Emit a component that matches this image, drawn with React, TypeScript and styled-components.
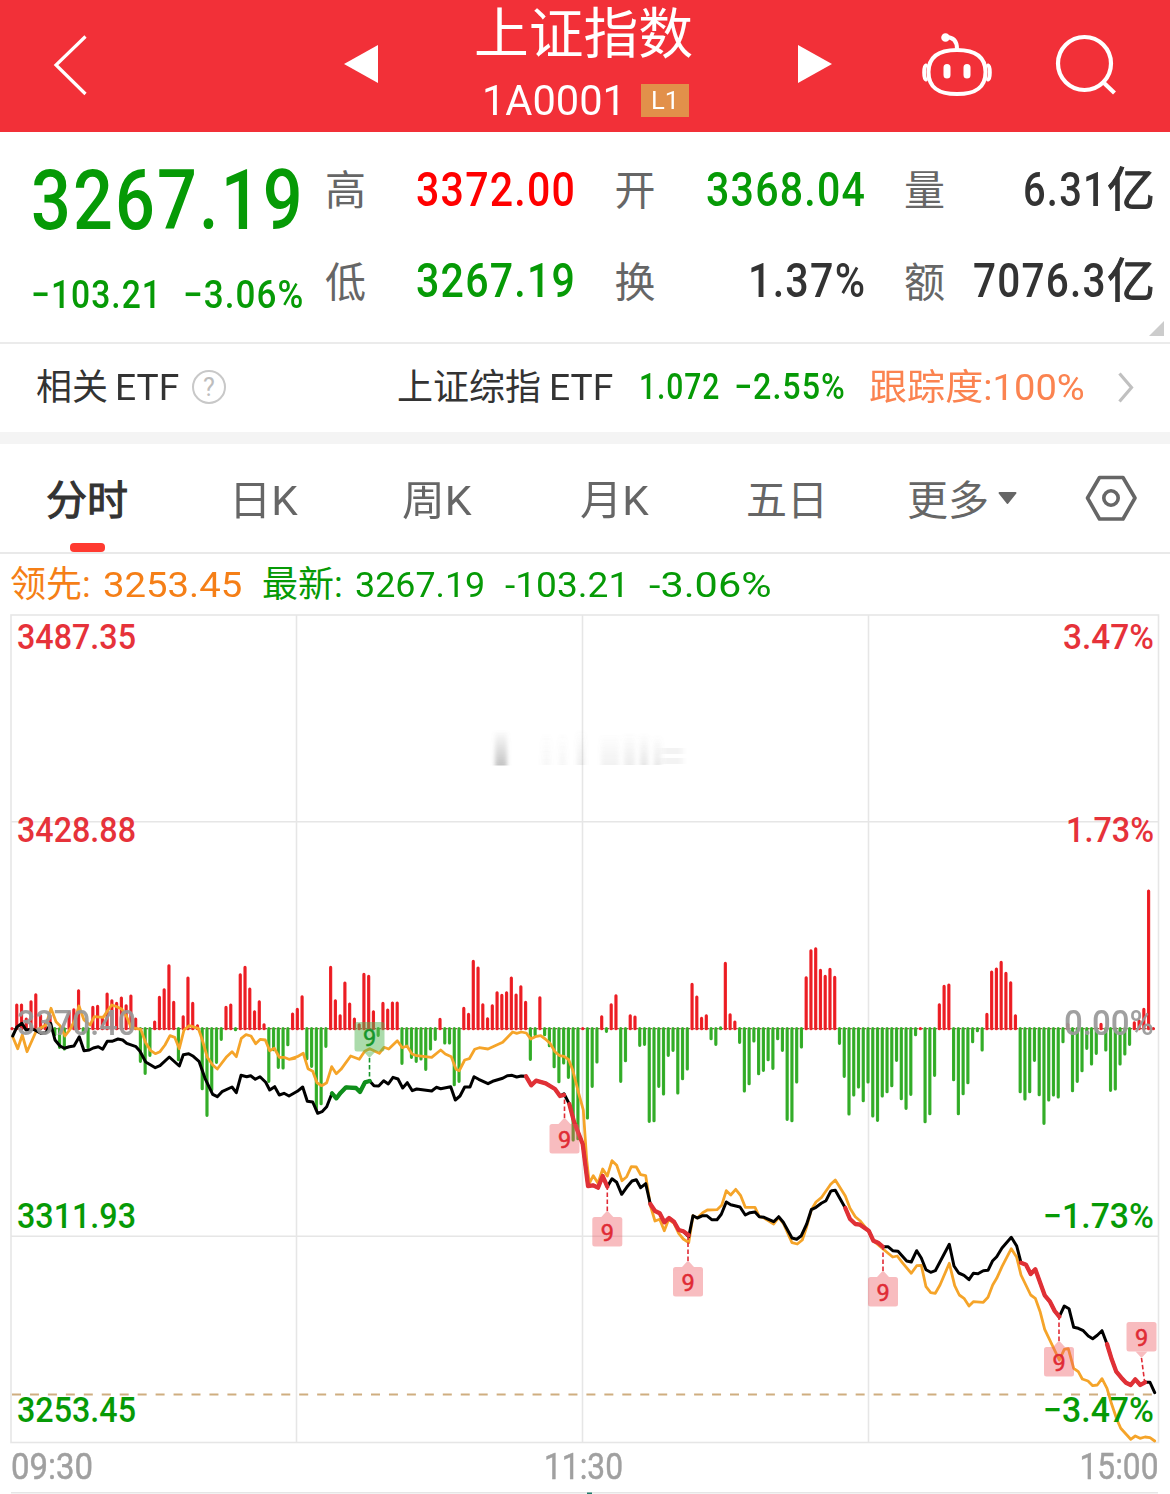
import React, { useLayoutEffect, useRef, useState } from "react";
import styled, { createGlobalStyle } from "styled-components";

const GREEN = "#069a06";
const RED = "#e6323a";
const FONT = `Roboto, "Noto Sans CJK SC", sans-serif`;

const GlobalStyle = createGlobalStyle`
  body { margin: 0; background: #fff; font-family: ${FONT}; }
  * { box-sizing: border-box; }
`;

const Page = styled.main`
  width: 1170px;
  height: 1494px;
  display: flex;
  flex-direction: column;
  overflow: hidden;
  background: #fff;
`;

/* ---------- text fitted to a fixed measure ---------- */

const FitBox = styled.span<{ $w: number; $size: number; $color?: string; $weight?: number; $stroke?: number; $ml?: number; $dy?: number }>`
  display: inline-block;
  flex: none;
  width: ${(p) => p.$w}px;
  margin-left: ${(p) => p.$ml ?? 0}px;
  padding-top: ${(p) => p.$dy ?? 0}px;
  font-size: ${(p) => p.$size}px;
  font-weight: ${(p) => p.$weight ?? 400};
  letter-spacing: ${(p) => (p.$weight === 500 ? "0.03em" : "normal")};
  color: ${(p) => p.$color ?? "inherit"};
  -webkit-text-stroke: ${(p) => p.$stroke ?? 0}px currentColor;
  white-space: pre;
`;

const FitInner = styled.span`
  display: inline-block;
  transform-origin: 0 50%;
`;

type FitProps = { w: number; size: number; color?: string; weight?: number; stroke?: number; ml?: number; dy?: number; children: string };

function Fit({ w, size, color, weight, stroke, ml, dy, children }: FitProps) {
  const ref = useRef<HTMLSpanElement>(null);
  const [scale, setScale] = useState(1);
  useLayoutEffect(() => {
    if (ref.current) setScale(w / ref.current.offsetWidth);
  }, [w, children]);
  return (
    <FitBox $w={w} $size={size} $color={color} $weight={weight} $stroke={stroke} $ml={ml} $dy={dy}>
      <FitInner ref={ref} style={{ transform: `scaleX(${scale})` }}>{children}</FitInner>
    </FitBox>
  );
}

/* ---------- header ---------- */

const Header = styled.header`
  flex: none;
  height: 132px;
  display: grid;
  grid-template-columns: 344px 34px 420px 34px 87px 76px 55px 66px;
  background: #f23038;
  color: #fff;
  svg { display: block; }
`;

const BackSlot = styled.div`
  padding: 30px 0 0 49px;
`;

const ArrowSlot = styled.div`
  padding-top: 44px;
`;

const RobotSlot = styled.div`
  grid-column: 6;
  padding-top: 30px;
`;

const SearchSlot = styled.div`
  grid-column: 8;
  padding-top: 32px;
`;

const TitleBlock = styled.div`
  display: flex;
  flex-direction: column;
`;

const Title = styled.div`
  height: 66px;
  line-height: 69px;
  padding-left: 96px;
`;

const CodeLine = styled.div`
  height: 66px;
  line-height: 69px;
  display: flex;
  padding-left: 104px;
`;

const LevelTag = styled.span`
  width: 48px;
  height: 33px;
  margin: 18px 0 0 15px;
  padding-left: 10px;
  line-height: 32px;
  background: #e2904a;
`;

/* ---------- quote ---------- */

const Quote = styled.section`
  flex: none;
  position: relative;
  height: 212px;
  display: flex;
  border-bottom: 2px solid #ebebeb;
`;

const Summary = styled.div`
  width: 325px;
  padding-left: 31px;
  color: ${GREEN};
`;

const Price = styled.div`
  height: 136px;
  line-height: 138px;
`;

const Change = styled.div`
  display: flex;
  height: 53px;
  line-height: 54px;
`;

const Stats = styled.div`
  display: grid;
  grid-template-columns: repeat(3, 251px);
  grid-template-rows: 115px 68px;
  column-gap: 38.5px;
`;

const Stat = styled.div<{ $h: number }>`
  display: flex;
  justify-content: space-between;
  line-height: ${(p) => p.$h}px;
`;

const Corner = styled.i`
  position: absolute;
  right: 6px;
  bottom: 6px;
  border-style: solid;
  border-width: 0 0 15px 15px;
  border-color: transparent transparent #ccc transparent;
`;

/* ---------- ETF ---------- */

const EtfRow = styled.section`
  flex: none;
  height: 100px;
  display: flex;
  padding-left: 36px;
  line-height: 87px;
  color: #333;
  border-bottom: 12px solid #f4f4f4;
  svg { flex: none; display: block; }
`;

const Help = styled.span`
  width: 34px;
  height: 34px;
  margin: 26px 0 0 13px;
  border: 2px solid #c8c8c8;
  border-radius: 50%;
  color: #bdbdbd;
  font-size: 25px;
  line-height: 31px;
  text-align: center;
`;

/* ---------- tabs ---------- */

const Tabs = styled.nav`
  flex: none;
  height: 110px;
  display: flex;
  border-bottom: 2px solid #e9e9e9;
  line-height: 112px;
  color: #666;
  svg { flex: none; display: block; }
`;

const Tab = styled.div<{ $ml: number; $active?: boolean }>`
  position: relative;
  display: flex;
  margin-left: ${(p) => p.$ml}px;
  color: ${(p) => (p.$active ? "#333" : "#666")};
  &::after {
    content: "";
    display: ${(p) => (p.$active ? "block" : "none")};
    position: absolute;
    left: 24px;
    bottom: 0;
    width: 35px;
    height: 9px;
    border-radius: 4px;
    background: #ff3a30;
  }
`;

const SettingsSlot = styled.div`
  margin-left: 64px;
`;

const Legend = styled.div`
  flex: none;
  height: 60px;
  line-height: 63px;
  display: flex;
  padding-left: 10px;
`;

const ChartArea = styled.section`
  flex: none;
  height: 880px;
  svg { display: block; font-family: ${FONT}; }
`;

/* ---------- chart data ---------- */

// Signed bar lengths per minute, in thirds of a pixel.
const BARS = [
  3, 75, 75, 33, 85, 106, 43, 18, 43, -22, -60, -65, 53, 61, 118, -17, -60, 68, 71, 38,
  108, 88, 80, 96, 73, 102, 33, -102, -138, -84, 24, 98, 121, 193, 83, -97, 40, 156, 80, 13,
  -184, -264, -187, -105, -36, 68, 75, -7, 166, 188, 123, 55, 85, 16, -162, -67, -120, -122, -52, 48,
  62, 100, -94, -117, -247, -229, -57, 188, 88, 43, 141, 78, 33, 16, 167, 161, 55, -24, 80, 60,
  81, 81, -108, -57, -90, -102, -95, -126, -65, -36, 32, -47, -47, -172, -162, 65, 47, 206, 186, 76,
  34, 73, 112, 104, 112, 156, 105, 130, 83, -96, -22, 97, -22, -55, -118, -163, -107, -150, -338, -334,
  3, -272, -177, -104, 40, -12, 76, 103, -162, -100, 43, 39, -54, -51, -282, -280, -177, -200, -84, -69,
  -197, -154, -125, 137, 99, 35, 43, -34, -51, -2, 200, 46, 24, -45, -191, -169, -41, -139, -129, -97,
  -123, -34, -69, -276, -280, -164, -59, 157, 238, 244, 179, 161, 182, 158, -48, -147, -260, -203, -179, -220,
  -164, -266, -279, -206, -193, -175, -99, -214, -243, -201, -22, 3, -283, -259, -144, 76, 131, 135, -157, -259,
  -199, -166, -43, -10, -68, 47, 174, 183, 203, 170, 142, 43, -193, -215, -193, -99, -202, -288, -218, -203,
  -209, -43, 17, -190, -162, -130, -63, -110, -78, 17, -68, -189, -185, -110, -80, -51, 22, 27, 62, 417, 3,
];

// Each chunk holds an origin and x,y pairs in thirds of a pixel.
type Chunk = [number, number, string];
const toPoints = (chunks: Chunk[]) =>
  chunks
    .map(([ox, oy, s]) =>
      s.trim().split(/\s+/).map((p) => {
        const [x, y] = p.split(",").map(Number);
        return `${(ox + x / 3).toFixed(1)},${(oy + y / 3).toFixed(1)}`;
      }).join(" "))
    .join(" ");

const PRICE = toPoints([
  [0, 940, "38,288 50,262 66,250 78,270 100,268 122,280 138,278 152,250 165,300 180,318 193,325 208,320 222,318 238,290 252,332 268,330 280,324 295,320 308,328 322,304 336,304 354,297 368,300 380,310 408,320 420,334 437,366 466,383 480,377 508,351 538,378 550,344 566,341 580,349 597,364 615,415 638,463 652,470 666,455 696,441 709,458 723,406 740,410 752,407 766,418 780,410 797,427 809,450 824,440 838,465 852,460 867,468"],
  [290, 940, "22,454 38,441 52,484 68,486 83,520 96,515 110,500 126,460 139,475 152,458 168,442 198,444 210,456 225,427 239,423 252,437 266,438 281,422 295,432 309,412 324,417 338,444 352,428 367,452 380,447 425,453 439,442 452,446 482,440 496,480 510,468 524,441 540,441 552,410 566,418 594,431 608,424 638,415 652,407 666,406 680,411 694,408 708,409 724,436 738,422 767,430 795,447 810,468 822,461 838,492 852,545 878,612"],
  [560, 930, "84,768 100,766 114,773 128,738 142,770 156,746 170,757 185,793 200,772 216,753 229,749 242,773 257,761 271,822 285,843 299,850 313,877 327,864 342,875 356,900 370,904 386,920 399,857 412,864 428,857 440,857 455,869 471,869 484,853 499,816 512,824 540,831 556,855 570,848 585,846 598,860 612,862 641,875 656,860 670,877 696,924 710,928 724,917 740,882 754,839 768,832 784,820 798,812 812,784"],
  [830, 1120, "6,212 16,211 46,264 60,297 76,312 90,314 116,332 130,362 144,368 158,380 174,380 188,392 204,394 230,423 244,426 260,392 274,414 288,449 302,457 316,452 358,373 372,438 386,459 402,466 417,479 430,460 444,461 460,452 474,451 488,422 500,410 516,384 544,352 560,378 573,428 588,434 602,462 616,448 644,526 660,545 674,573 688,590 703,558 717,566 731,622 745,625 760,632 775,648 788,656 802,646 816,632 831,672 845,718 859,755 874,773 888,788 902,795 916,778 931,795 945,787 960,787 974,818"],
]);

const LEAD = toPoints([
  [0, 940, "38,290 53,326 67,285 81,335 110,270 138,255 153,205 168,245 180,257 195,288 210,268 225,240 237,198 252,240 270,255 283,230 310,232 322,213 335,195 350,200 365,207 380,230 393,262 422,268 437,308 452,332 466,341 480,335 495,315 510,287 524,292 538,326 552,270 568,257 595,265 607,300 622,352 638,375 652,387 680,350 696,335 709,350 724,295 738,284 753,288 767,311 781,298 796,300 809,332 823,325 838,352 852,352 867,358 885,355"],
  [290, 940, "0,357 22,350 40,340 54,386 68,394 81,428 95,437 110,428 125,380 139,401 153,388 182,348 208,358 224,334 239,326 268,340 282,322 296,327 322,302 337,323 351,318 366,342 380,347 425,352 452,330 466,342 484,350 498,388 508,392 524,360 538,356 554,328 568,323 594,327 638,307 668,276 680,280 694,276 709,279 722,297 736,290 752,287 766,297 780,310 795,335 809,347 822,349 836,359 848,390 866,460"],
  [560, 930, "70,540 80,690 88,760 100,737 114,760 128,717 142,738 156,692 170,706 186,752 200,740 214,710 229,711 242,734 257,737 271,826 285,873 299,868 313,902 326,868 342,880 356,910 370,927 386,938 399,857 412,864 428,848 442,840 471,839 485,826 499,782 512,795 527,778 542,797 556,832 585,832 598,860 612,864 641,882 656,862 670,880 696,938 712,942 727,930 740,890 754,840 768,816 784,803 812,763"],
  [830, 1120, "16,180 46,228 60,265 76,290 90,302 116,334 130,362 158,386 188,411 202,408 217,428 244,460 260,437 274,436 288,500 302,518 316,520 330,495 358,430 374,497 388,525 402,535 417,558 430,545 460,547 474,532 488,495 500,475 516,440 544,386 560,412 573,465 602,525 616,535 631,577 644,628 688,720 703,688 715,686 731,745 745,755 757,777 774,783 788,797 802,795 816,776 831,805 845,853 860,897 872,925 902,958 916,948 930,955 945,951 960,953 974,963"],
]);

const FALLS = [
  toPoints([[290, 940, "708,409 724,436 738,422 767,430 795,447 810,468 822,465"]]),
  toPoints([[290, 940, "838,492 852,545 878,612"], [560, 930, "84,768 100,766 114,773 128,738 142,770"]]),
  toPoints([[560, 930, "271,822 285,843 299,850 313,877 327,864 342,875 356,900 370,904 386,916"]]),
  toPoints([[830, 1120, "46,264 60,297 76,312 90,314 116,332 130,362 144,368 158,380"]]),
  toPoints([[830, 1120, "573,428 588,434 602,462 616,448 644,526 660,545 674,573 688,590"]]),
  toPoints([[830, 1120, "831,672 845,718 859,755 874,773 888,788 902,795 916,778 931,795 945,787"]]),
];
const RISE = toPoints([[290, 940, "126,460 139,475 152,458 168,442 198,444 210,456 225,427 239,423"]]);

type Mark = { x: number; y: number; tx: number; ty: number; up?: boolean; green?: boolean };
const MARKS: Mark[] = [
  { x: 369.5, y: 1022, tx: 369.5, ty: 1082, up: true, green: true },
  { x: 564.5, y: 1124, tx: 564.5, ty: 1096 },
  { x: 607.3, y: 1217, tx: 607.3, ty: 1188 },
  { x: 688, y: 1267, tx: 688, ty: 1237 },
  { x: 883, y: 1277, tx: 883, ty: 1248 },
  { x: 1059, y: 1347, tx: 1059, ty: 1318 },
  { x: 1141.5, y: 1322, tx: 1144.5, ty: 1381, up: true },
];

function Marker({ x, y, tx, ty, up, green }: Mark) {
  const c = green ? "#16962a" : "#e02b35";
  const tip = up
    ? `M${x - 6} ${y + 29.6}L${x} ${y + 36}L${x + 6} ${y + 29.6}Z`
    : `M${x - 6} ${y}L${x} ${y - 6.5}L${x + 6} ${y}Z`;
  return (
    <g>
      <g fill={green ? "#52b552" : "#ee5a62"} opacity={green ? 0.48 : 0.4}>
        <rect x={x - 15} y={y} width={30} height={29.6} rx={2.5} />
        <path d={tip} />
      </g>
      <line x1={x} y1={up ? y + 36 : y - 6} x2={tx} y2={ty} stroke={c} strokeWidth={1.6} strokeDasharray="4.5 2.5" />
      <text x={x} y={y + 23.8} textAnchor="middle" fontSize={23.5} fill={c} stroke={c} strokeWidth={0.5}>9</text>
    </g>
  );
}

const AXIS: { t: string; x: number; w: number; cy: number; c: string; weight?: number; size?: number }[] = [
  { t: "3487.35", x: 18, w: 117, cy: 636.5, c: RED },
  { t: "3428.88", x: 18, w: 117, cy: 829.5, c: RED },
  { t: "3370.40", x: 18, w: 117, cy: 1022.5, c: "#999" },
  { t: "3311.93", x: 18, w: 117, cy: 1216, c: GREEN },
  { t: "3253.45", x: 18, w: 117, cy: 1409.3, c: GREEN },
  { t: "3.47%", x: 1064, w: 89, cy: 636.5, c: RED },
  { t: "1.73%", x: 1067, w: 86, cy: 829.5, c: RED },
  { t: "0.00%", x: 1065, w: 88, cy: 1022.5, c: "#999" },
  { t: "−1.73%", x: 1044, w: 109, cy: 1216, c: GREEN },
  { t: "−3.47%", x: 1044, w: 109, cy: 1409.3, c: GREEN },
  { t: "09:30", x: 12, w: 80, cy: 1466, c: "#999", weight: 400, size: 36 },
  { t: "11:30", x: 545, w: 77, cy: 1466, c: "#999", weight: 400, size: 36 },
  { t: "15:00", x: 1080.5, w: 77, cy: 1466, c: "#999", weight: 400, size: 36 },
];

function Chart() {
  const base = 1028.7;
  return (
    <svg width={1170} height={880} viewBox="0 614 1170 880">
      <defs>
        <linearGradient id="fade" x1="0" y1="0" x2="0" y2="1">
          <stop offset="0" stopColor="#888" stopOpacity="0" />
          <stop offset="1" stopColor="#888" stopOpacity="1" />
        </linearGradient>
        <filter id="soft" x="-20%" y="-20%" width="140%" height="140%"><feGaussianBlur stdDeviation="2 0.4" /></filter>
      </defs>
      <g stroke="#e6e6e6" strokeWidth={1.6} fill="none">
        <rect x={11} y={615} width={1147.5} height={827.5} />
        <path d="M296.5 615V1442M582.5 615V1442M868.5 615V1442M11 821.7H1158M11 1236.2H1158M11 1492.8H1158" />
      </g>
      <g fill="url(#fade)" filter="url(#soft)">
        <rect x={495} y={730} width={12} height={35.5} opacity={0.5} />
        <rect x={542} y={733} width={9} height={32} opacity={0.06} />
        <rect x={559} y={733} width={7} height={32} opacity={0.08} />
        <rect x={577} y={730} width={8} height={35} opacity={0.14} />
        <rect x={601} y={733} width={18} height={32} opacity={0.11} />
        <rect x={624} y={733} width={11} height={32} opacity={0.15} />
        <rect x={640} y={733} width={8} height={32} opacity={0.2} />
        <rect x={654} y={735} width={7} height={30} opacity={0.18} />
      </g>
      <g fill="#888" filter="url(#soft)" opacity={0.09}>
        <rect x={662} y={748} width={21} height={6} />
        <rect x={662} y={758} width={21} height={6} />
      </g>
      <rect x={587} y={1492.5} width={5} height={2} fill="#1d7a6a" />
      <line x1={12} y1={base} x2={1155} y2={base} stroke="#8a5a4a" strokeWidth={1.2} strokeDasharray="3 1.755" />
      <g strokeWidth={3.2} strokeLinecap="round">
        {BARS.map((v, i) => {
          const x = 12 + i * 4.7556;
          const end = v > 0 ? base - v / 3 + 1.4 : base - v / 3 - 1.4;
          return <line key={i} x1={x} y1={base} x2={x + 0.001} y2={v === 3 ? base : end} stroke={v > 0 ? "#f02228" : "#38b02c"} />;
        })}
      </g>
      <g strokeWidth={1} opacity={0.3}>
        {BARS.map((v, i) => (
          <line key={i} x1={12 + i * 4.7556} x2={12 + i * 4.7556} y1={base} y2={base - v / 3} stroke={v > 0 ? "#d00c14" : "#1d9a1d"} />
        ))}
      </g>
      <line x1={12} y1={1394.6} x2={1155} y2={1394.6} stroke="#cfae80" strokeWidth={2} strokeDasharray="9 8.95" />
      <g fill="none" strokeLinejoin="round" strokeLinecap="round">
        <polyline points={LEAD} stroke="#f5a429" strokeWidth={2.8} />
        <polyline points={PRICE} stroke="#000" strokeWidth={3} />
        {FALLS.map((p) => <polyline key={p} points={p} stroke="#e03036" strokeWidth={4.3} />)}
        <polyline points={RISE} stroke="#0f8f1b" strokeWidth={4.3} />
      </g>
      {AXIS.map((a) => {
        const size = a.size ?? 35;
        return (
          <text key={a.t} x={a.x - 1} y={a.cy + size * 0.3555} fontSize={size} fontWeight={a.weight ?? 500} fill={a.c}
            stroke={a.weight ? a.c : "none"} strokeWidth={0.5}
            textLength={a.w + 2} lengthAdjust="spacingAndGlyphs" opacity={a.c === "#999" ? 0.93 : 1}>
            {a.t}
          </text>
        );
      })}
      {MARKS.map((m) => <Marker key={m.x} {...m} />)}
    </svg>
  );
}

export default function App() {
  return (
    <Page>
      <GlobalStyle />
      <Header>
        <BackSlot>
          <svg width="44" height="70" viewBox="0 0 44 70" fill="none" stroke="#fff" strokeWidth="3.2"><path d="M36.5 6.5L7 35L36.5 64" /></svg>
        </BackSlot>
        <ArrowSlot><svg width="34" height="40"><path d="M0 20L34 1V39Z" fill="#fff" /></svg></ArrowSlot>
        <TitleBlock>
          <Title><Fit w={219} size={54.5}>上证指数</Fit></Title>
          <CodeLine>
            <Fit w={144} size={43}>1A0001</Fit>
            <LevelTag><Fit w={28} size={26.5}>L1</Fit></LevelTag>
          </CodeLine>
        </TitleBlock>
        <ArrowSlot><svg width="34" height="40"><path d="M34 20L0 1V39Z" fill="#fff" /></svg></ArrowSlot>
        <RobotSlot>
          <svg width="76" height="70" viewBox="919 30 76 70" fill="none" stroke="#fff" strokeWidth="4" strokeLinecap="round">
            <path d="M957 50C974 50 985.5 56 985.5 72C985.5 88 975 94 957 94C939 94 928.5 88 928.5 72C928.5 56 940 50 957 50Z" />
            <path d="M957 49C957 41 953 37 946 37" />
            <circle cx="945.5" cy="37.500" r="2.3" fill="#fff" />
            <path d="M926 65.5Q924.200 66 924.200 72.500Q924.200 79 926 79.500M988 65.500Q989.800 66 989.800 72.500Q989.800 79 988 79.500" />
            <path d="M947 67.500V75M967 67.500V75" strokeWidth="7" />
          </svg>
        </RobotSlot>
        <SearchSlot>
          <svg width="66" height="66" viewBox="1050 32 66 66" fill="none" stroke="#fff" strokeWidth="4.2">
            <circle cx="1084.5" cy="63.5" r="26.5" />
            <path d="M1103.5 82.5L1114.5 93" />
          </svg>
        </SearchSlot>
      </Header>

      <Quote>
        <Summary>
          <Price><Fit w={274} size={82.5} weight={500}>3267.19</Fit></Price>
          <Change>
            <Fit w={131} size={38.5} weight={500}>−103.21</Fit>
            <Fit w={121} size={38.5} weight={500} ml={21}>−3.06%</Fit>
          </Change>
        </Summary>
        <Stats>
          <Stat $h={115}><Fit w={41} size={41} color="#666" dy={2}>高</Fit><Fit w={160} size={47.5} weight={500} color="#f00" dy={1}>3372.00</Fit></Stat>
          <Stat $h={115}><Fit w={41} size={41} color="#666" dy={2}>开</Fit><Fit w={160} size={47.5} weight={500} color={GREEN} dy={1}>3368.04</Fit></Stat>
          <Stat $h={115}>
            <Fit w={41} size={41} color="#666" dy={2}>量</Fit>
            <span><Fit w={84} size={47.5} weight={500} color="#333" dy={1}>6.31</Fit><Fit w={48} size={47} stroke={1} color="#333">亿</Fit></span>
          </Stat>
          <Stat $h={68}><Fit w={41} size={41} color="#666" dy={2}>低</Fit><Fit w={160} size={47.5} weight={500} color={GREEN}>3267.19</Fit></Stat>
          <Stat $h={68}><Fit w={41} size={41} color="#666" dy={2}>换</Fit><Fit w={118} size={47.5} weight={500} color="#333">1.37%</Fit></Stat>
          <Stat $h={68}>
            <Fit w={41} size={41} color="#666" dy={2}>额</Fit>
            <span><Fit w={134} size={47.5} weight={500} color="#333">7076.3</Fit><Fit w={48} size={47} stroke={1} color="#333">亿</Fit></span>
          </Stat>
        </Stats>
        <Corner />
      </Quote>

      <EtfRow>
        <Fit w={72} size={36} dy={1}>相关</Fit>
        <Fit w={64} size={36} ml={7} dy={1}>ETF</Fit>
        <Help>?</Help>
        <Fit w={144} size={36} ml={171} dy={1}>上证综指</Fit>
        <Fit w={64} size={36} ml={8} dy={1}>ETF</Fit>
        <Fit w={81} size={36} weight={500} color={GREEN} ml={26}>1.072</Fit>
        <Fit w={112} size={36} weight={500} color={GREEN} ml={14}>−2.55%</Fit>
        <Fit w={216} size={36} color="#fb8350" ml={23} dy={1}>跟踪度:100%</Fit>
        <svg width="60" height="88" fill="none" stroke="#c0c0c0" strokeWidth="3.2"><path d="M34.5 29.5L46.5 43.500L34.5 57.500" /></svg>
      </EtfRow>

      <Tabs>
        <Tab $ml={46} $active><Fit w={82} size={41} stroke={1.1} dy={1}>分时</Fit></Tab>
        <Tab $ml={101}><Fit w={69} size={41} dy={1}>日K</Fit></Tab>
        <Tab $ml={104}><Fit w={70} size={41} dy={1}>周K</Fit></Tab>
        <Tab $ml={108}><Fit w={69} size={41} dy={1}>月K</Fit></Tab>
        <Tab $ml={97}><Fit w={82} size={41} dy={1}>五日</Fit></Tab>
        <Tab $ml={79}>
          <Fit w={82} size={41} dy={1}>更多</Fit>
          <svg width="30" height="108"><path d="M10.5 49H26.500L18.500 59Z" fill="#666" stroke="#666" strokeWidth="2" strokeLinejoin="round" /></svg>
        </Tab>
        <SettingsSlot>
          <svg width="56" height="108" viewBox="1082 444 56 108" fill="none" stroke="#666" strokeWidth="3.6">
            <path d="M1086.5 498L1098.5 477.5H1122L1134 498L1122 519H1098.5Z" strokeLinejoin="round" />
            <circle cx="1110" cy="498" r="7.2" />
          </svg>
        </SettingsSlot>
      </Tabs>

      <Legend>
        <Fit w={81} size={36} color="#f57f17">领先:</Fit>
        <Fit w={139} size={35} color="#f57f17" ml={12}>3253.45</Fit>
        <Fit w={81} size={36} color={GREEN} ml={20}>最新:</Fit>
        <Fit w={130} size={35} color={GREEN} ml={12}>3267.19</Fit>
        <Fit w={124} size={35} color={GREEN} ml={20}>-103.21</Fit>
        <Fit w={123} size={35} color={GREEN} ml={20}>-3.06%</Fit>
      </Legend>

      <ChartArea><Chart /></ChartArea>
    </Page>
  );
}
